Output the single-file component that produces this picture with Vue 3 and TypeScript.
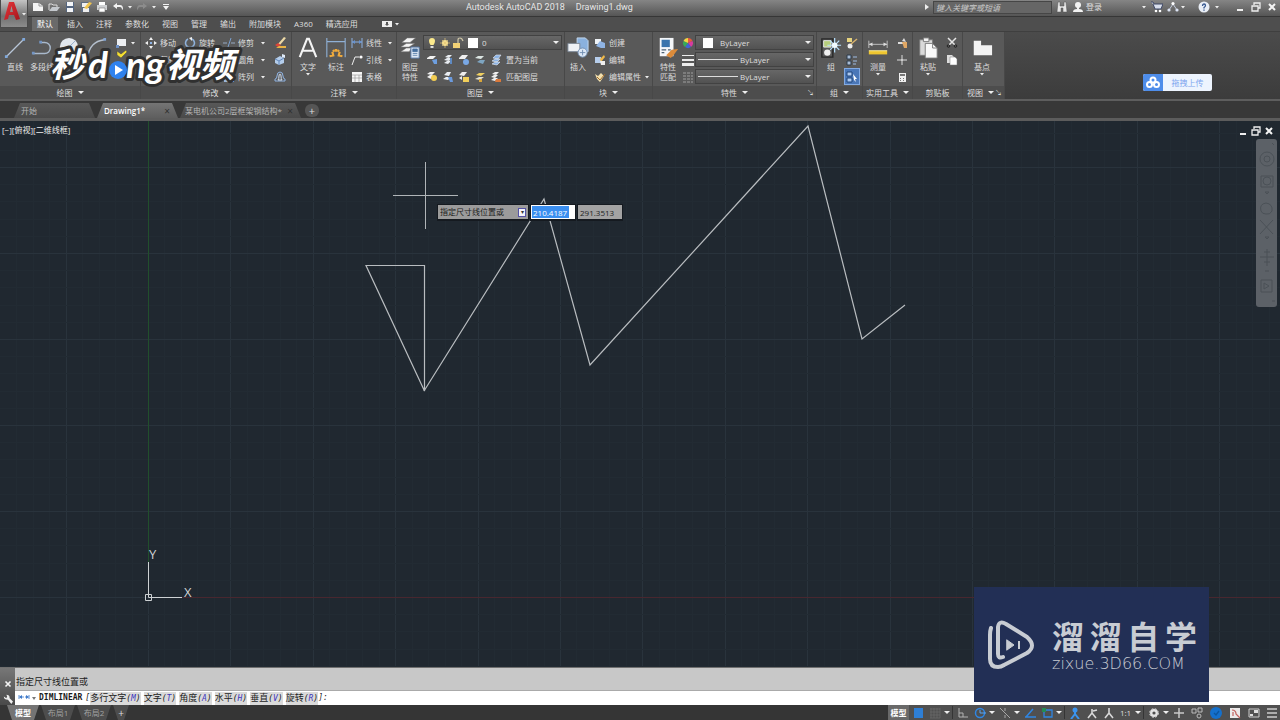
<script setup lang="ts">
import { computed, ref } from 'vue'

interface Cell { icon?: string; text?: string; arrow?: boolean }
interface StatusItem { kind: 'icon' | 'arrow' | 'sep' | 'text' | 'wide'; name?: string }

const quick = ['new', 'open', 'save', 'saveas', 'print', 'undo', 'caret', 'redo', 'caret', 'custom']
const menus = ['默认', '插入', '注释', '参数化', '视图', '管理', '输出', '附加模块', 'A360', '精选应用']
const activeMenu = ref('默认')

const moveCol: Cell[] = [{ icon: 'move', text: '移动' }, { icon: 'copy', text: '复制' }]
const rotateCol: Cell[] = [{ icon: 'rotate', text: '旋转' }]
const trimCol: Cell[] = [
  { icon: 'trim', text: '修剪', arrow: true },
  { icon: 'fillet', text: '圆角', arrow: true },
  { icon: 'array', text: '阵列', arrow: true },
]
const noteCol: Cell[] = [
  { icon: 'linear', text: '线性', arrow: true },
  { icon: 'leader', text: '引线', arrow: true },
  { icon: 'table', text: '表格' },
]
const blockCol: Cell[] = [
  { icon: 'create', text: '创建' },
  { icon: 'edit', text: '编辑' },
  { icon: 'attr', text: '编辑属性', arrow: true },
]
const layerRows = [
  { icons: ['lay1', 'lay2', 'lay3', 'lay4', 'lay5'], text: '置为当前' },
  { icons: ['lay6', 'lay7', 'lay8', 'lay9', 'lay10'], text: '匹配图层' },
]

const options = [
  ['多行文字', 'M'], ['文字', 'T'], ['角度', 'A'], ['水平', 'H'], ['垂直', 'V'], ['旋转', 'R'],
]

const status: StatusItem[] = [
  { kind: 'icon', name: 's-snap' }, { kind: 'icon', name: 's-grid' }, { kind: 'arrow' }, { kind: 'sep' },
  { kind: 'icon', name: 's-ortho' }, { kind: 'icon', name: 's-polar' }, { kind: 'arrow' },
  { kind: 'icon', name: 's-iso' }, { kind: 'arrow' }, { kind: 'icon', name: 's-track' },
  { kind: 'icon', name: 's-osnap' }, { kind: 'arrow' }, { kind: 'sep' },
  { kind: 'icon', name: 's-ann1' }, { kind: 'icon', name: 's-ann2' }, { kind: 'icon', name: 's-ann3' },
  { kind: 'text', name: '1:1' }, { kind: 'arrow' }, { kind: 'sep' },
  { kind: 'icon', name: 's-gear' }, { kind: 'arrow' }, { kind: 'icon', name: 's-plus' },
  { kind: 'wide', name: 's-iso2' }, { kind: 'wide', name: 's-hw' }, { kind: 'wide', name: 's-clean' },
  { kind: 'wide', name: 's-full' }, { kind: 'icon', name: 's-menu' },
]

const origin = { x: 148, y: 477 }
const step = { x: 82.4, y: 86 }
function lines(from: number, size: number, limit: number) {
  const out: { p: number; major: boolean }[] = []
  const minor = size / 5
  for (let k = -Math.floor(from / minor); from + k * minor < limit; k++) {
    out.push({ p: Math.round(from + k * minor), major: k % 5 === 0 })
  }
  return out.sort((a, b) => Number(a.major) - Number(b.major))
}
const columns = computed(() => lines(origin.x, step.x, 2560))
const rows = computed(() => lines(origin.y, step.y, 1440))

const distance = ref('210.4187')
const second = ref('291.3513')
</script>

<template>
  <svg class="defs" aria-hidden="true">
    <defs>
      <linearGradient id="g-red" x1="0" y1="0" x2="1" y2="1"><stop offset="0" stop-color="#e8353a" /><stop offset="1" stop-color="#a3171d" /></linearGradient>
      <symbol id="caret" viewBox="0 0 6 6"><path d="M1 2h4L3 4.600z" fill="#eee" /></symbol>
      <symbol id="new" viewBox="0 0 12 12"><path d="M1 2h6l4 3v5H1z" fill="#f4f4f4" /><path d="M7 2v3h4" fill="none" stroke="#999" /></symbol>
      <symbol id="open" viewBox="0 0 12 12"><path d="M1 9V3h3l1 1h4v2" fill="none" stroke="#ddd" /><path d="M1 10l3-4h8l-3 4z" fill="#c4c8cd" /></symbol>
      <symbol id="save" viewBox="0 0 12 12"><path d="M2 1h8v10H2z" fill="#54657f" /><path d="M3 1h6v4H3zM3 7h6v4H3z" fill="#f3f5f8" /></symbol>
      <symbol id="saveas" viewBox="0 0 12 12"><path d="M1 1h9v10H1z" fill="#5f6c80" /><path d="M2 2h6v4H2zM3 7h6v4H3z" fill="#efefef" /><path d="M4 7l5-6 3 1-5 6z" fill="#efc450" /></symbol>
      <symbol id="print" viewBox="0 0 12 12"><path d="M3 1h6v3H3z" fill="#fff" /><path d="M1 4h10v5H1z" fill="#cfd1d3" /><path d="M3 7h6v4H3z" fill="#fff" stroke="#777" stroke-width=".6" /></symbol>
      <symbol id="undo" viewBox="0 0 12 12"><path d="M1 5l4-3v2h3q3 0 3 4l-1 1q0-3-2-3H5v2z" fill="#f2f2f2" /></symbol>
      <symbol id="redo" viewBox="0 0 12 12"><path d="M11 5L7 2v2H4Q1 4 1 8l1 1q0-3 2-3h3v2z" fill="#8c8c8c" /></symbol>
      <symbol id="custom" viewBox="0 0 12 12"><path d="M3 3h6v1H3zM3 5h6L6 9z" fill="#f2f2f2" /></symbol>

      <symbol id="line" viewBox="0 0 24 24"><path d="M3 21L21 3" stroke="#b8c6d8" stroke-width="1.300" /><path d="M1 20h3v3H1zM20 1h3v3h-3z" fill="#7fa8dc" /></symbol>
      <symbol id="pline" viewBox="0 0 24 24"><path d="M2 18h13a6 6 0 0 0 0-12h-5" fill="none" stroke="#a9b9cc" stroke-width="1.500" /><path d="M1 16h3v3H1zM9 4h3v3H9z" fill="#7395c4" /></symbol>
      <symbol id="circle" viewBox="0 0 24 24"><circle cx="12" cy="11" r="10" fill="#e2e6ec" /><path d="M12 11l7-7" stroke="#8fa6c8" /><path d="M11 10h3v3h-3z" fill="#7d9fd0" /></symbol>
      <symbol id="arc" viewBox="0 0 24 24"><path d="M3 22Q5 5 21 3" fill="none" stroke="#b5c0ce" stroke-width="1.500" /><path d="M1 20h3v3H1zM20 1h3v3h-3z" fill="#7fa0d0" /></symbol>
      <symbol id="rect" viewBox="0 0 12 12"><path d="M2 2h9v7H2z" fill="#eceef1" /><path d="M1 8h3v3H1z" fill="#6d8fc4" /></symbol>
      <symbol id="move" viewBox="0 0 12 12"><path d="M6 0l2 3H4zM6 12l2-3H4zM0 6l3-2v4zM12 6L9 4v4z" fill="#f1f1f1" /><path d="M5 5h2v2H5z" fill="#8cb2e6" /></symbol>
      <symbol id="copy" viewBox="0 0 12 12"><circle cx="4" cy="4" r="3" fill="#eee" /><circle cx="8" cy="8" r="3" fill="#8eaed8" /></symbol>
      <symbol id="rotate" viewBox="0 0 12 12"><path d="M4 2a4.500 4.500 0 1 0 4 0" fill="none" stroke="#8fb2dc" stroke-width="1.600" /><path d="M8 0v4L5 1z" fill="#eee" /></symbol>
      <symbol id="trim" viewBox="0 0 12 12"><path d="M0 6h4M8 6h4" stroke="#96aac4" /><path d="M5 10L8 1" stroke="#7aa0d0" /></symbol>
      <symbol id="fillet" viewBox="0 0 12 12"><path d="M2 2h4q4 0 4 4v4" fill="none" stroke="#a9bdd8" stroke-width="1.500" /></symbol>
      <symbol id="array" viewBox="0 0 12 12"><path d="M1 1h4v4H1zM7 1h4v4H7zM1 7h4v4H1zM7 7h4v4H7z" fill="#9ab6dc" /></symbol>
      <symbol id="erase" viewBox="0 0 12 12"><path d="M4 7l6-7 2 1-6 7z" fill="#ecd9a6" /><path d="M1 8l3-2 3 2-3 2z" fill="#dc463a" /><path d="M5 9h7v2H2z" fill="#e9b344" /></symbol>
      <symbol id="explode" viewBox="0 0 12 12"><path d="M1 5l5-3 4 2v5l-5 2-4-2z" fill="#b4cdeb" /><path d="M1 5l4 2v4M5 7l5-3" fill="none" stroke="#6186b8" /><path d="M8 0l3 1v3L8 3z" fill="#dfeaf8" /></symbol>
      <symbol id="offset" viewBox="0 0 12 12"><path d="M1 10V8q2 0 2-3 0-4 3-4t3 4q0 3 2 3v2z" fill="none" stroke="#8fb3e2" /><path d="M4 9q1-1 1-4 0-2 1-2t1 2q0 3 1 4z" fill="none" stroke="#d5e1f1" /></symbol>
      <symbol id="bigtext" viewBox="0 0 24 24"><path d="M3 22L11 2h2l8 20M6 15h12" fill="none" stroke="#f4f4f4" stroke-width="2.300" /></symbol>
      <symbol id="dim" viewBox="0 0 24 24"><path d="M2 1v21M22 1v21M2 5h20" fill="none" stroke="#8fb0d6" stroke-width="1.200" /><path d="M8 16l1 4-4 1M12 13v3M16 16l-1 4 4 1M9 14l1 2M15 14l-1 2" fill="none" stroke="#efaa3d" stroke-width="2.400" /></symbol>
      <symbol id="linear" viewBox="0 0 12 12"><path d="M1 1v10M11 1v10M1 5h10" stroke="#8db2e2" /><path d="M1 5l3-2v4zM11 5L8 3v4z" fill="#6893cf" /></symbol>
      <symbol id="leader" viewBox="0 0 12 12"><path d="M1 11L4 3h4" fill="none" stroke="#eee" /><circle cx="10" cy="3" r="1.600" fill="#fff" /></symbol>
      <symbol id="table" viewBox="0 0 12 12"><path d="M1 1h10v10H1z" fill="#f5f5f5" /><path d="M1 4h10M1 7h10M4 4v7M8 4v7" stroke="#8d8d8d" stroke-width=".6" /></symbol>
      <symbol id="layers" viewBox="0 0 24 24"><path d="M3 6l6-5h9l-6 5zM2 11l6-4h9l-6 4zM2 16l6-4h6l-3 4z" fill="#f3f3f3" stroke="#777" stroke-width=".6" /><path d="M13 11h9v12h-9z" fill="#dfe8f4" stroke="#577aaa" /><path d="M15 13h5v3h-5zM15 18h5M15 20h5" fill="#466f9f" stroke="#466f9f" stroke-width=".8" /></symbol>
      <symbol id="bulb" viewBox="0 0 12 12"><path d="M3 4a3 3 0 0 1 6 0q0 2-1.500 4h-3Q3 6 3 4z" fill="#fbe98c" /><path d="M4.500 9h3v2h-3z" fill="#ddd" /></symbol>
      <symbol id="sun" viewBox="0 0 12 12"><circle cx="6" cy="6" r="3" fill="#fbe79a" /><path d="M6 1v10M1 6h10M3 3l6 6M9 3l-6 6" stroke="#e5c878" stroke-width=".7" /></symbol>
      <symbol id="lock" viewBox="0 0 12 12"><path d="M1 6h7v5H1z" fill="#f0d075" /><path d="M6 6V3q0-2 2-2t3 3" fill="none" stroke="#cfc7a8" stroke-width="1.200" /></symbol>
      <symbol id="lay1" viewBox="0 0 12 12"><path d="M1 4l3-2h6L7 5H1z" fill="#f3f3f3" /><path d="M6 6l5-1v5H8z" fill="#6e9fe0" /></symbol>
      <symbol id="lay2" viewBox="0 0 12 12"><path d="M3 3l3-2h4L7 4zM2 6l3-2h5L7 7zM2 9l3-2h4L6 10z" fill="#e8ecf1" /><path d="M8 4h2v6H8z" fill="#5f8ac2" /></symbol>
      <symbol id="lay3" viewBox="0 0 12 12"><path d="M1 4l3-3h6L7 5H1z" fill="#f0f0f0" /><circle cx="8" cy="8" r="3" fill="#79a8e5" /></symbol>
      <symbol id="lay4" viewBox="0 0 12 12"><path d="M1 4l3-2h6L7 5z" fill="#dbe5e2" /><path d="M3 8l3-2h5L9 10z" fill="#7ea5c1" /></symbol>
      <symbol id="lay5" viewBox="0 0 12 12"><path d="M3 4l3-3h5L8 5zM2 7l3-2h5L7 8zM2 10l3-2h5l-3 3z" fill="#8cb3e4" stroke="#e8eef6" stroke-width=".6" /></symbol>
      <symbol id="lay6" viewBox="0 0 12 12"><path d="M1 3l3-2h5L6 4zM1 6l3-2h3L5 8z" fill="#eee" /><circle cx="8" cy="7" r="3" fill="#f2cd52" /></symbol>
      <symbol id="lay7" viewBox="0 0 12 12"><path d="M2 4l3-3h4L7 5zM1 8l3-2h5L6 9z" fill="#e9edf2" /><path d="M6 6h4l1 5H8z" fill="#6b9add" /></symbol>
      <symbol id="lay8" viewBox="0 0 12 12"><path d="M1 4l3-3h5L6 5zM1 7l3-2v4z" fill="#eee" /><path d="M5 6h6v5H5z" fill="#f1cf5a" /></symbol>
      <symbol id="lay9" viewBox="0 0 12 12"><path d="M2 4l3-2h6L7 5z" fill="#f0d060" /><path d="M1 8l4-2h5L6 9z" fill="#e4e0ce" /><path d="M5 8h3v3H5z" fill="#d9a63a" /></symbol>
      <symbol id="lay10" viewBox="0 0 12 12"><path d="M2 3l3-2h4L6 4zM1 6l3-2h4L5 7zM1 9l3-2h4l-3 3z" fill="#eee" /><path d="M6 8h5v3H5z" fill="#d9783a" /></symbol>
      <symbol id="insert" viewBox="0 0 24 24"><path d="M11 1h9l3 3v12H11z" fill="#8ab1de" stroke="#c7dcf2" /><path d="M1 7h13v9H1z" fill="#eef1f5" stroke="#7a8694" /><circle cx="17" cy="17" r="5" fill="#dbe7f5" stroke="#6f8cb0" /><path d="M14 17h6M17 14v6" stroke="#6f8cb0" /></symbol>
      <symbol id="create" viewBox="0 0 12 12"><path d="M1 2h6v5H1z" fill="#eef2f6" /><path d="M2 9l4-5 5 2v5H7z" fill="#8fb4e4" /></symbol>
      <symbol id="edit" viewBox="0 0 12 12"><path d="M1 3h6v6H1z" fill="#b6cdeb" /><path d="M6 5l4-4 1 2-4 5z" fill="#f0b94a" /><path d="M6 7h5v4H7z" fill="#eee" /></symbol>
      <symbol id="attr" viewBox="0 0 12 12"><path d="M1 3l3 2 3-3 3 3-4 6-3-3z" fill="#f3e0ae" /><path d="M3 6l3 3 5-6" fill="none" stroke="#a26a28" /></symbol>
      <symbol id="match" viewBox="0 0 24 24"><path d="M3 1h15v20H3z" fill="#f4f6f9" /><path d="M5 3h9v8H5z" fill="#3b74ad" /><path d="M5 14h5M5 17h3M12 14h3" stroke="#4d6275" stroke-width="1.500" /><path d="M10 20l6-6 7-1-5 7-3 3z" fill="#dc8b3a" /></symbol>
      <symbol id="wheel" viewBox="0 0 12 12"><path d="M6 6L6 1a5 5 0 0 1 4.500 3z" fill="#e65a3d" /><path d="M6 6l4.500-2a5 5 0 0 1-1.500 6z" fill="#d83ba0" /><path d="M6 6l3 4a5 5 0 0 1-6 0z" fill="#4263d6" /><path d="M6 6l-3 4a5 5 0 0 1-1.500-6z" fill="#37aa5a" /><path d="M6 6L1.500 4A5 5 0 0 1 6 1z" fill="#f1d543" /></symbol>
      <symbol id="weights" viewBox="0 0 12 12"><path d="M0 1h12v1H0zM0 5h12v2H0zM0 9h12v3H0z" fill="#ededed" /></symbol>
      <symbol id="types" viewBox="0 0 12 12"><path d="M1 2h10M1 5h10M1 8h10M1 11h10" stroke="#a0a0a0" stroke-dasharray="3 1" /></symbol>
      <symbol id="group" viewBox="0 0 24 24"><path d="M2 2h12v20H2z" fill="none" stroke="#282828" stroke-width="1.500" /><path d="M4 4h8v7H4z" fill="#b6cd7b" stroke="#eee" /><circle cx="8" cy="17" r="3.500" fill="#f0f0f0" /><path d="M16 1v16M8 9h15M11 4l10 10M21 4L11 14" stroke="#b8e2ff" stroke-width="1.300" /><circle cx="16" cy="9" r="3" fill="#f1fbff" /></symbol>
      <symbol id="grp1" viewBox="0 0 12 12"><path d="M1 1h5v4H1z" fill="#e6d27d" /><circle cx="4" cy="9" r="2.500" fill="#eee" /><path d="M5 7l6-5" stroke="#d8b36d" stroke-width="1.500" /></symbol>
      <symbol id="grp2" viewBox="0 0 12 12"><path d="M1 1h4v4H1zM1 7h4v4H1z" fill="#a8bcd5" stroke="#2d3a4b" /><path d="M7 3h4M7 7h4M7 10h3" stroke="#9ebce4" /></symbol>
      <symbol id="grp3" viewBox="0 0 12 12"><path d="M1 1h5v4H1zM1 7h5v4H1z" fill="#aecaf2" stroke="#1f4478" /><path d="M7 3l4 5-2 0 1 3-2-2z" fill="#fff" /></symbol>
      <symbol id="measure" viewBox="0 0 24 24"><path d="M2 4v8M22 4v8M2 8h20" stroke="#c6c6c6" /><path d="M2 8l4-2v4zM22 8l-4-2v4z" fill="#ddd" /><path d="M2 15h20v4H2z" fill="#efc630" /><path d="M2 15h20" stroke="#fff2a0" /></symbol>
      <symbol id="qsel" viewBox="0 0 12 12"><path d="M8 1l2 4-4-1zM2 5h6v2H2z" fill="#ddd" /><path d="M6 5h5v6H8z" fill="#e0a765" /></symbol>
      <symbol id="point" viewBox="0 0 12 12"><path d="M6 1v10M1 6h10" stroke="#ddd" /><path d="M5 5h2v2H5z" fill="#ccc" /></symbol>
      <symbol id="calc" viewBox="0 0 12 12"><path d="M3 2h7v9H3z" fill="#f0f0f0" /><path d="M4 3h5v2H4zM4 7h1v1H4zM7 7h1v1H7zM4 9h1v1H4zM7 9h1v1H7z" fill="#777" /></symbol>
      <symbol id="paste" viewBox="0 0 24 24"><path d="M3 3h14v17H3z" fill="#d9d9d9" stroke="#767676" /><path d="M7 1h6v4H7z" fill="#f3f3f3" stroke="#777" /><path d="M9 7h8l5 5v11H9z" fill="#f8f8f8" stroke="#777" /><path d="M17 7v5h5" fill="none" stroke="#777" /></symbol>
      <symbol id="cut" viewBox="0 0 12 12"><path d="M2 1l7 7M10 1L3 8" stroke="#e6e6e6" stroke-width="1.500" /><circle cx="2.500" cy="9" r="1.300" fill="none" stroke="#222" /><circle cx="9.500" cy="9" r="1.300" fill="none" stroke="#222" /></symbol>
      <symbol id="clipcopy" viewBox="0 0 12 12"><path d="M1 1h5l2 2v6H1z" fill="#ddd" /><path d="M4 3h5l2 2v6H4z" fill="#fff" stroke="#777" stroke-width=".5" /></symbol>
      <symbol id="base" viewBox="0 0 24 24"><path d="M3 4h8v5h12v11H3z" fill="#f3f3f3" /></symbol>

      <symbol id="find" viewBox="0 0 12 12"><path d="M2 1h2v4h4V1h2l1 10H7V7H5v4H1z" fill="#e7e7e7" stroke="#555" stroke-width=".5" /></symbol>
      <symbol id="user" viewBox="0 0 12 12"><circle cx="6" cy="4" r="3" fill="#f3f3f3" /><path d="M5 6h2v2q4 0 4 3H1q0-3 4-3z" fill="#f3f3f3" /></symbol>
      <symbol id="cart" viewBox="0 0 12 12"><path d="M0 1h2l1 2h9l-2 5H4L2 3" fill="#d8deec" stroke="#3d4664" /><circle cx="5" cy="10" r="1.300" fill="#fff" /><circle cx="9" cy="10" r="1.300" fill="#fff" /></symbol>
      <symbol id="a360" viewBox="0 0 12 12"><path d="M2 9l4-6 4 6" fill="none" stroke="#c3cbdc" /><circle cx="6" cy="2.500" r="1.600" fill="#fff" /><circle cx="2" cy="9" r="1.600" fill="#dce4f4" /><circle cx="10" cy="9" r="1.600" fill="#dce4f4" /></symbol>
      <symbol id="help" viewBox="0 0 12 12"><circle cx="6" cy="6" r="5.500" fill="#e9eef6" /><path d="M4.500 5q0-2 1.500-2t1.500 1.500Q7.500 5.500 6 6.500v1M6 8.500v1.200" fill="none" stroke="#35578f" stroke-width="1.300" /></symbol>
      <symbol id="w-min" viewBox="0 0 12 12"><path d="M3 8h6v2H3z" fill="#eee" /></symbol>
      <symbol id="w-res" viewBox="0 0 12 12"><path d="M4 4V2h6v5H8M2 5h6v5H2z" fill="none" stroke="#eee" stroke-width="1.300" /></symbol>
      <symbol id="w-close" viewBox="0 0 12 12"><path d="M3 3l6 6M9 3L3 9" stroke="#f4f4f4" stroke-width="2" /></symbol>
      <symbol id="play" viewBox="0 0 12 12"><path d="M1 3h10v6H1z" fill="#eee" /><path d="M5 4h2v2h1L6 8 4 6h1z" fill="#555" /></symbol>
      <symbol id="wrench" viewBox="0 0 12 12"><path d="M4 1q4 0 4 4l4 4-2 3-4-5Q1 7 1 3l3 2 1-2z" fill="#eee" /></symbol>
      <symbol id="dimsmall" viewBox="0 0 12 12"><path d="M1 3v4M11 3v4M2 5h8" stroke="#5b8fd6" stroke-dasharray="4 1" /><path d="M1 5l3-2v4zM11 5L8 3v4z" fill="#3f79c9" /></symbol>

      <symbol id="s-snap" viewBox="0 0 12 12"><path d="M2 1h9v10H2z" fill="#2e7fd6" /></symbol>
      <symbol id="s-grid" viewBox="0 0 12 12"><path d="M2 1v10M5 1v10M8 1v10M11 1v10M1 2h10M1 5h10M1 8h10M1 11h10" stroke="#717171" stroke-width=".6" /></symbol>
      <symbol id="s-ortho" viewBox="0 0 12 12"><path d="M2 1v9h9M2 6h4v4" fill="none" stroke="#b2b2b2" /></symbol>
      <symbol id="s-polar" viewBox="0 0 12 12"><circle cx="6" cy="6" r="4.500" fill="none" stroke="#2f86e2" stroke-width="1.500" /><path d="M6 6h6M6 6V3" stroke="#58a4f2" /></symbol>
      <symbol id="s-iso" viewBox="0 0 12 12"><path d="M1 1l10 10M6 1v3M6 8v3" stroke="#a8a8a8" /></symbol>
      <symbol id="s-track" viewBox="0 0 12 12"><path d="M1 10h11M2 10l7-8" stroke="#2f86e2" stroke-width="1.500" /></symbol>
      <symbol id="s-osnap" viewBox="0 0 12 12"><path d="M3 3h8v7H3z" fill="none" stroke="#2f86e2" stroke-width="1.300" /><path d="M1 1h4v4H1z" fill="#248c54" /></symbol>
      <symbol id="s-ann1" viewBox="0 0 12 12"><circle cx="6" cy="3" r="2.500" fill="#3b94ee" /><path d="M6 4v4M2 12l4-5 4 5" fill="none" stroke="#3b94ee" stroke-width="2" /></symbol>
      <symbol id="s-ann2" viewBox="0 0 12 12"><path d="M6 2v5M2 11l4-5 4 5M7 4l4-1" fill="none" stroke="#d8d8d8" stroke-width="1.600" /></symbol>
      <symbol id="s-ann3" viewBox="0 0 12 12"><path d="M6 1v6M2 11l4-5 4 5" fill="none" stroke="#d8d8d8" stroke-width="1.600" /></symbol>
      <symbol id="s-gear" viewBox="0 0 12 12"><circle cx="6" cy="6" r="2.800" fill="none" stroke="#e4e4e4" stroke-width="2.400" /><circle cx="6" cy="6" r="4.400" fill="none" stroke="#d4d4d4" stroke-dasharray="2 1.500" /></symbol>
      <symbol id="s-plus" viewBox="0 0 12 12"><path d="M6 1v10M1 6h10" stroke="#c9c9c9" stroke-width="1.500" /></symbol>
      <symbol id="s-iso2" viewBox="0 0 12 12"><path d="M1 2h4v4H1zM7 1h4v4H7z" fill="none" stroke="#bbb" /><circle cx="8" cy="9" r="2" fill="none" stroke="#bbb" /></symbol>
      <symbol id="s-hw" viewBox="0 0 12 12"><circle cx="6" cy="6" r="6" fill="#1470cc" /><path d="M4 6l2 2 3-4" fill="none" stroke="#0d569e" stroke-width="1.300" /></symbol>
      <symbol id="s-clean" viewBox="0 0 12 12"><path d="M1 1h10v10H1z" fill="#eceaea" /><path d="M3 3q4 0 4 4l4 4M4 9V5" fill="none" stroke="#c2605c" stroke-width="1.200" /></symbol>
      <symbol id="s-full" viewBox="0 0 12 12"><path d="M1 2h10v8H1z" fill="none" stroke="#ccc" /><path d="M6 3h4v3H6zM2 7h3v2H2z" fill="#ddd" /></symbol>
      <symbol id="s-menu" viewBox="0 0 12 12"><path d="M1 2h10M1 6h10M1 10h10" stroke="#ccc" stroke-width="1.300" /></symbol>
    </defs>
  </svg>

  <div class="app">
    <button class="appmenu" aria-label="应用程序菜单">
      <svg class="logo" viewBox="0 0 18 20"><path d="M1 19L6 1h5l6 17-4 1-2-5H6l-1 4zM7 11h3L8.500 5z" fill="url(#g-red)" fill-rule="evenodd" /></svg>
      <svg class="c6"><use href="#caret" /></svg>
    </button>

    <header class="titlebar">
      <nav class="quick">
        <button v-for="(q, i) in quick" :key="i" :class="{ small: q === 'caret' }" :aria-label="q">
          <svg :class="q === 'caret' ? 'c6' : 'i12'"><use :href="'#' + q" /></svg>
        </button>
      </nav>
      <h1><span>Autodesk AutoCAD 2018</span><span>Drawing1.dwg</span></h1>
      <div class="tools">
        <i class="tri-right"></i>
        <input class="search" type="text" placeholder="键入关键字或短语" aria-label="搜索" />
        <svg class="i12"><use href="#find" /></svg>
        <button class="login"><svg class="i12"><use href="#user" /></svg>登录</button>
        <svg class="c6"><use href="#caret" /></svg>
        <svg class="i12"><use href="#cart" /></svg>
        <svg class="i12"><use href="#a360" /></svg>
        <svg class="c6 near"><use href="#caret" /></svg>
        <svg class="i12 helpicon"><use href="#help" /></svg>
        <svg class="c6"><use href="#caret" /></svg>
      </div>
      <div class="window">
        <button aria-label="最小化"><svg class="i12"><use href="#w-min" /></svg></button>
        <button aria-label="还原"><svg class="i12"><use href="#w-res" /></svg></button>
        <button aria-label="关闭"><svg class="i12"><use href="#w-close" /></svg></button>
      </div>
    </header>

    <nav class="menus">
      <button v-for="m in menus" :key="m" :class="{ on: m === activeMenu }" @click="activeMenu = m">{{ m }}</button>
      <button class="media" aria-label="更多"><svg class="i12"><use href="#play" /></svg><svg class="c6"><use href="#caret" /></svg></button>
    </nav>

    <div class="ribbon">
      <section class="panel draw">
        <div class="body">
          <button class="big"><svg><use href="#line" /></svg>直线</button>
          <button class="big"><svg><use href="#pline" /></svg>多段线</button>
          <button class="big" aria-label="圆"><svg><use href="#circle" /></svg></button>
          <button class="big" aria-label="圆弧"><svg><use href="#arc" /></svg></button>
          <div class="col">
            <button class="cell" aria-label="矩形"><svg class="i12"><use href="#rect" /></svg><svg class="c6"><use href="#caret" /></svg></button>
          </div>
        </div>
        <footer>绘图<i class="tri"></i></footer>
      </section>

      <section class="panel modify">
        <div class="body">
          <div v-for="(col, i) in [moveCol, rotateCol, trimCol]" :key="i" class="col">
            <button v-for="c in col" :key="c.text" class="cell">
              <svg class="i12"><use :href="'#' + c.icon" /></svg>{{ c.text }}<svg v-if="c.arrow" class="c6 end"><use href="#caret" /></svg>
            </button>
          </div>
          <div class="col">
            <button v-for="n in ['erase', 'explode', 'offset']" :key="n" class="cell" :aria-label="n"><svg class="i12"><use :href="'#' + n" /></svg></button>
          </div>
        </div>
        <footer>修改<i class="tri"></i></footer>
      </section>

      <section class="panel note">
        <div class="body">
          <button class="big"><svg><use href="#bigtext" /></svg>文字<svg class="c6"><use href="#caret" /></svg></button>
          <button class="big"><svg><use href="#dim" /></svg>标注</button>
          <div class="col fill">
            <button v-for="c in noteCol" :key="c.text" class="cell">
              <svg class="i12"><use :href="'#' + c.icon" /></svg>{{ c.text }}<svg v-if="c.arrow" class="c6 end"><use href="#caret" /></svg>
            </button>
          </div>
        </div>
        <footer>注释<i class="tri"></i></footer>
      </section>

      <section class="panel layer">
        <div class="body">
          <button class="big"><svg><use href="#layers" /></svg>图层<span>特性</span></button>
          <div class="col fill">
            <label class="combo">
              <svg class="i12"><use href="#bulb" /></svg><svg class="i12"><use href="#sun" /></svg><svg class="i12"><use href="#lock" /></svg><i class="swatch"></i>
              <select aria-label="图层"><option>0</option></select><i class="tri"></i>
            </label>
            <div v-for="r in layerRows" :key="r.text" class="cell">
              <button v-for="n in r.icons" :key="n" :aria-label="n"><svg class="i12"><use :href="'#' + n" /></svg></button>
              <button>{{ r.text }}</button>
            </div>
          </div>
        </div>
        <footer>图层<i class="tri"></i></footer>
      </section>

      <section class="panel block">
        <div class="body">
          <button class="big"><svg><use href="#insert" /></svg>插入</button>
          <div class="col fill">
            <button v-for="c in blockCol" :key="c.text" class="cell">
              <svg class="i12"><use :href="'#' + c.icon" /></svg>{{ c.text }}<svg v-if="c.arrow" class="c6 end"><use href="#caret" /></svg>
            </button>
          </div>
        </div>
        <footer>块<i class="tri"></i></footer>
      </section>

      <section class="panel props">
        <div class="body">
          <button class="big"><svg><use href="#match" /></svg>特性<span>匹配</span></button>
          <div class="col">
            <button v-for="n in ['wheel', 'weights', 'types']" :key="n" class="cell" :aria-label="n"><svg class="i12"><use :href="'#' + n" /></svg></button>
          </div>
          <div class="col fill">
            <label class="combo color"><i class="swatch"></i><select aria-label="颜色"><option>ByLayer</option></select><i class="tri"></i></label>
            <label class="combo"><i class="rule"></i><select aria-label="线宽"><option>ByLayer</option></select><i class="tri"></i></label>
            <label class="combo"><i class="rule"></i><select aria-label="线型"><option>ByLayer</option></select><i class="tri"></i></label>
          </div>
        </div>
        <footer>特性<i class="tri"></i><i class="launch">↘</i></footer>
      </section>

      <section class="panel grp">
        <div class="body">
          <button class="big"><svg><use href="#group" /></svg>组</button>
          <div class="col">
            <button v-for="n in ['grp1', 'grp2', 'grp3']" :key="n" class="cell" :class="{ pressed: n === 'grp3' }" :aria-label="n"><svg class="i12"><use :href="'#' + n" /></svg></button>
          </div>
        </div>
        <footer>组<i class="tri"></i></footer>
      </section>

      <section class="panel util">
        <div class="body">
          <button class="big"><svg><use href="#measure" /></svg>测量<svg class="c6"><use href="#caret" /></svg></button>
          <div class="col">
            <button v-for="n in ['qsel', 'point', 'calc']" :key="n" class="cell" :aria-label="n"><svg class="i12"><use :href="'#' + n" /></svg></button>
          </div>
        </div>
        <footer>实用工具<i class="tri"></i></footer>
      </section>

      <section class="panel clip">
        <div class="body">
          <button class="big"><svg><use href="#paste" /></svg>粘贴<svg class="c6"><use href="#caret" /></svg></button>
          <div class="col">
            <button v-for="n in ['cut', 'clipcopy']" :key="n" class="cell" :aria-label="n"><svg class="i12"><use :href="'#' + n" /></svg></button>
          </div>
        </div>
        <footer>剪贴板</footer>
      </section>

      <section class="panel view">
        <div class="body">
          <button class="big"><svg><use href="#base" /></svg>基点<svg class="c6"><use href="#caret" /></svg></button>
        </div>
        <footer>视图<i class="tri"></i><i class="launch">↘</i></footer>
      </section>

      <button class="upload">
        <svg viewBox="0 0 20 17"><g fill="none" stroke="#fff" stroke-width="2"><circle cx="10" cy="6" r="2.500" /><circle cx="6.500" cy="10.500" r="2.500" /><circle cx="13.500" cy="10.500" r="2.500" /></g></svg>
        <span>拖拽上传</span>
      </button>

      <svg class="brand" viewBox="0 0 196 52" role="img" aria-label="秒dong视频">
        <g class="brandtext">
          <text x="4" y="34" class="cjk">秒</text>
          <text x="42" y="35" class="lat">d</text>
          <text x="80" y="35" class="lat">ng</text>
          <text x="120" y="34" class="cjk">视频</text>
        </g>
        <circle cx="72" cy="27" r="9" fill="#2f82ee" />
        <path d="M69 22l8 5-8 5z" fill="#fff" />
        <path d="M71 8l4 3 5-4 1 2-6 6-4-3z" fill="#f5df31" stroke="#444" stroke-width=".5" />
      </svg>
    </div>

    <nav class="files">
      <button class="file">开始</button>
      <button class="file on"><b>Drawing1*</b><span>×</span></button>
      <button class="file long">某电机公司2层框架钢结构*<span>×</span></button>
      <button class="add" aria-label="新建图形">+</button>
    </nav>

    <main class="stage">
      <svg class="drawing">
        <g class="grid">
          <line v-for="c in columns" :key="'c' + c.p" :x1="c.p + 0.5" y1="0" :x2="c.p + 0.5" y2="100%" :class="{ major: c.major }" />
          <line v-for="r in rows" :key="'r' + r.p" x1="0" :y1="r.p - 0.5" x2="100%" :y2="r.p - 0.5" :class="{ major: r.major }" />
        </g>
        <line x1="148.500" y1="0" x2="148.500" y2="441" stroke="#214f2c" />
        <line x1="182" y1="476.500" x2="100%" y2="476.500" stroke="#48272f" />
        <g fill="none" stroke="#b9bdc0" stroke-width="1.200">
          <path d="M366 144.500H424.500V270z" />
          <path d="M424 270L544 78 590 244 808 5 862 218 905 184" />
        </g>
        <path d="M393 74.500h65M425.500 41v67" fill="none" stroke="#b0b5b8" />
        <path d="M148.500 441v35.500H182M145.500 473.500h6v6h-6z" fill="none" stroke="#ced2d4" />
        <text x="149" y="438" class="axis">Y</text>
        <text x="184" y="476" class="axis">X</text>
      </svg>

      <div class="viewlabel">[−][俯视][二维线框]</div>
      <div class="viewwin">
        <button aria-label="最小化"><svg class="i12"><use href="#w-min" /></svg></button>
        <button aria-label="还原"><svg class="i12"><use href="#w-res" /></svg></button>
        <button aria-label="关闭"><svg class="i12"><use href="#w-close" /></svg></button>
      </div>

      <aside class="navbar">
        <svg viewBox="0 0 20 167" fill="none" stroke="#4b5157">
          <circle cx="11" cy="20" r="7" /><circle cx="11" cy="20" r="3" />
          <path d="M5 37h12v11H5z" /><circle cx="11" cy="42" r="4" /><path d="M9 53h4l-2 2z" />
          <path d="M5 72q-2-7 5-8 7 1 6 8-2 4-6 3-4 0-5-3z" />
          <path d="M4 81l13 14M17 81L4 95M9 98h4l-2 2z" />
          <path d="M11 110v17M4 118h14M8 113h6M8 123h6M9 132h4" />
          <path d="M5 141h11v12H5zM8 144v6l5-3zM16 4l2 2M16 162h3" />
        </svg>
      </aside>

      <form class="dynamic" @submit.prevent>
        <label class="prompt" for="dyn-a">指定尺寸线位置或<i>▾</i></label>
        <input id="dyn-a" v-model="distance" class="active" type="text" />
        <input v-model="second" type="text" aria-label="第二坐标" />
      </form>
    </main>

    <section class="command">
      <div class="grip">
        <button aria-label="关闭"><svg class="i12"><use href="#w-close" /></svg></button>
        <button aria-label="自定义"><svg class="i12"><use href="#wrench" /></svg></button>
      </div>
      <div class="lines">
        <div class="history">指定尺寸线位置或</div>
        <div class="current">
          <svg class="i12"><use href="#dimsmall" /></svg><i class="tri dark"></i>
          <b>DIMLINEAR</b><em>[</em>
          <button v-for="o in options" :key="o[1]">{{ o[0] }}<em>(<u>{{ o[1] }}</u>)</em></button>
          <em>]:</em>
        </div>
      </div>
    </section>

    <footer class="statusbar">
      <nav class="layouts">
        <button class="on">模型</button>
        <button>布局1</button>
        <button>布局2</button>
        <button class="plus" aria-label="新建布局">+</button>
      </nav>
      <div class="toggles">
        <button class="model">模型</button>
        <template v-for="(s, i) in status" :key="i">
          <i v-if="s.kind === 'sep'" class="sep"></i>
          <button v-else :class="s.kind" :aria-label="s.name ?? '选项'">
            <i v-if="s.kind === 'arrow'" class="tri"></i>
            <template v-else-if="s.kind === 'text'">{{ s.name }}</template>
            <svg v-else class="i12"><use :href="'#' + s.name" /></svg>
          </button>
        </template>
      </div>
    </footer>

    <aside class="site">
      <svg viewBox="0 0 48 52" fill="none" stroke="#c8ccd3" stroke-width="4" stroke-linecap="round" stroke-linejoin="round">
        <path d="M4 9Q3 12 3 16v24q0 8 8 8 3 0 6-2l23-12q10-7 0-16L19 5Q12 1 11 8v27q0 5 5 3" />
        <path d="M20 21l7 5-7 5z" fill="#c8ccd3" stroke-width="1" />
        <path d="M32 22v8" stroke-width="2" stroke-linecap="butt" />
      </svg>
      <div class="sitename">
        <strong><span>溜</span><span>溜</span><span>自</span><span>学</span></strong>
        <small>zixue.3D66.COM</small>
      </div>
    </aside>
  </div>
</template>

<style>
body { margin: 0; background: #202830; }
</style>

<style scoped>
* { box-sizing: border-box; }
.defs { position: absolute; width: 0; height: 0; }
.app {
  position: relative; display: flex; flex-direction: column; min-height: 100vh; overflow: hidden;
  font: 8px/10px "Open Sans", "Noto Sans CJK SC", sans-serif; color: #dedede; background: #3a3a3a;
}
button { padding: 0; border: 0; background: none; color: inherit; font: inherit; white-space: nowrap; cursor: pointer; }
input, select { font: inherit; color: inherit; border: 0; padding: 0; min-width: 0; outline: 0; }
i { font-style: normal; flex: none; }
svg { display: block; flex: none; }
.i12 { width: 12px; height: 12px; }
.c6 { width: 6px; height: 6px; }
.tri { width: 0; height: 0; border: 3px solid transparent; border-top-color: #eee; border-bottom: 0; }
.tri.dark { border-width: 3px 2px 0; border-top-color: #777; }

.appmenu {
  position: absolute; z-index: 2; left: 0; top: 0; width: 28px; height: 28px; display: flex; align-items: center;
  padding-left: 2px; background: linear-gradient(#c4c4c4, #717171 60%, #8c8c8c); border: 1px solid #4a4a4a; border-top: 0;
}
.logo { width: 18px; height: 20px; margin-top: -5px; }

.titlebar {
  height: 17px; display: flex; align-items: center; justify-content: space-between; padding: 0 2px 2px 32px;
  background: linear-gradient(#858585, #555); border-bottom: 1px solid #363636; position: relative;
}
.quick { display: flex; align-items: center; gap: 4px; }
.quick .small { width: 6px; margin: 0 -1px; }
h1 {
  position: absolute; left: 36.4%; margin: 0; display: flex; gap: 11px;
  font: 400 9px/16px Roboto, sans-serif; color: #e6e6e6; white-space: nowrap;
}
.tools { display: flex; align-items: center; gap: 4px; margin-left: auto; }
.tri-right { border: 3px solid transparent; border-left: 4px solid #eee; border-right: 0; }
.search { width: 119px; height: 13px; padding-left: 2px; background: #666; border: 1px solid #464646; font-style: italic; }
.search::placeholder { color: #c9c9c9; opacity: 1; }
.login { display: flex; align-items: center; gap: 2px; margin-right: 35px; }
.near { margin-left: -3px; }
.helpicon { margin-left: 8px; }
.window { display: flex; gap: 4px; margin-left: 14px; }

.menus { height: 15px; display: flex; align-items: stretch; gap: 13px; padding-left: 32px; background: #4e4e4e; border-bottom: 1px solid #3f3f3f; }
.menus button.on { background: #6a6a6a; padding: 0 5px; margin-right: -4px; color: #fff; }
.menus .media { display: flex; align-items: center; gap: 1px; margin-left: 10px; }

.ribbon { position: relative; display: flex; height: 69px; background: linear-gradient(#4b4b4b, #3c3c3c); border-bottom: 2px solid #5e5e5e; }
.panel { display: flex; flex-direction: column; background: #595959; border-right: 1px solid #484848; flex: none; }
.body { flex: 1; display: flex; padding: 2px 2px 0 3px; }
.panel footer { height: 13px; display: flex; align-items: center; justify-content: center; gap: 5px; background: #4d4d4d; position: relative; }
.launch { position: absolute; right: 2px; font-size: 7px; }
.draw { width: 141px; }
.modify { width: 151px; }
.note { width: 105px; }
.layer { width: 168px; }
.block { width: 88px; }
.props { width: 164px; }
.grp { width: 46px; }
.util { width: 50px; }
.clip { width: 50px; }
.view { width: 42px; }
.big { width: 26px; display: flex; flex-direction: column; align-items: center; padding-top: 2px; }
.big > svg:first-child { width: 22px; height: 24px; margin-bottom: 2px; }
.big .c6 { margin-top: -1px; }
.draw .big { width: 27px; padding-right: 1px; }
.draw .body { padding-left: 2px; }
.col { display: flex; flex-direction: column; }
.fill { flex: 1; }
.cell { height: 17px; display: flex; align-items: center; gap: 3px; }
.end { margin-left: auto; }
.draw .col { padding-left: 5px; }
.modify .body { padding-left: 4px; }
.modify .col { width: 39px; }
.modify .col:nth-child(3) { width: 43px; }
.modify .col:last-child { width: 12px; margin-left: 8px; }
.note .body { gap: 2px; padding-right: 3px; }
.layer .body { padding-left: 0; }
.layer .cell { gap: 4px; padding-left: 3px; }
.block .body { padding-left: 0; gap: 3px; }
.props .body { padding-left: 2px; }
.props .body .col:not(.fill) { padding: 0 1px; }
.combo {
  height: 15px; margin: 1px 0; display: flex; align-items: center; gap: 4px; padding: 0 2px;
  background: linear-gradient(#676767, #525252); border: 1px solid #424242;
}
.combo select { flex: 1; appearance: none; background: none; }
.swatch { width: 10px; height: 10px; background: #fff; }
.layer .combo { gap: 1px; }
.layer .combo .swatch { margin: 0 3px; }
.combo.color { gap: 7px; padding-left: 7px; }
.rule { width: 40px; height: 1px; background: #ddd; }
.combo .rule { margin-right: -2px; }
.pressed { background: #4a77b8; outline: 1px solid #83aae2; outline-offset: -1px; }
.grp .col, .util .col, .clip .col { width: 16px; }
.grp .cell, .util .cell, .clip .cell { justify-content: center; }
.grp .body { padding-left: 1px; }
.util .body, .clip .body { padding-left: 2px; gap: 3px; }
.view .body { padding-left: 6px; }
.view footer { justify-content: flex-start; padding-left: 4px; }

.upload {
  position: absolute; right: 68px; top: 42px; width: 69px; height: 17px; display: flex; overflow: hidden;
  border-radius: 2px; background: #edf4fe; color: #7da4ee;
}
.upload svg { width: 20px; height: 17px; background: #4e8dea; }
.upload span { flex: 1; line-height: 17px; }

.brand { position: absolute; left: 46px; top: 11px; width: 196px; height: 52px; overflow: visible; }
.brandtext { fill: #fff; stroke: #303030; stroke-width: 6px; stroke-linejoin: round; paint-order: stroke; font-style: italic; font-weight: 700; }
.cjk { font-family: "Noto Sans CJK SC", sans-serif; font-size: 34px; }
.lat { font-family: Lato, "Open Sans", sans-serif; font-size: 37px; }

.files { height: 20px; display: flex; align-items: stretch; padding: 2px 0 0 14px; gap: 2px; background: #383838; border-bottom: 3px solid #5c5c5c; }
.file {
  width: 81px; display: flex; align-items: center; justify-content: space-between; padding: 0 8px 0 7px; color: #b4b4b4;
  background: linear-gradient(#585858, #4a4a4a); clip-path: polygon(6px 0, calc(100% - 6px) 0, 100% 100%, 0 100%);
}
.file b { font-weight: 600; }
.file span { color: #303030; font-size: 10px; }
.file.on { color: #fff; background: linear-gradient(#757575, #5e5e5e); }
.file.long { width: 121px; padding: 0 8px 0 5px; }
.add { width: 14px; margin: 1px 2px; border-radius: 6px; background: #555; font-size: 11px; }

.stage { position: relative; flex: 1; min-height: 300px; background: #202830; overflow: hidden; }
.drawing { position: absolute; left: 0; top: 0; width: 100%; height: 100%; }
.grid line { stroke: #222b33; }
.grid .major { stroke: #29333c; }
.axis { font: 13px "Open Sans", sans-serif; fill: #ced2d4; }
.viewlabel { position: absolute; left: 2px; top: 4px; color: #eee; }
.viewwin { position: absolute; right: 5px; top: 4px; display: flex; gap: 1px; }
.navbar { position: absolute; right: 3px; top: 18px; width: 21px; height: 168px; background: #5c6167; border-radius: 3px; }
.navbar svg { width: 20px; height: 167px; }
.dynamic { position: absolute; left: 437px; top: 83px; display: flex; gap: 1px; }
.dynamic > * { height: 17px; border: 1px solid #151a20; border-bottom-width: 2px; }
.prompt { width: 92px; display: flex; align-items: center; justify-content: space-between; padding: 0 2px; background: #9b9b9b; color: #1b1b1b; white-space: nowrap; }
.prompt i { width: 8px; height: 9px; font-size: 6px; text-align: center; background: #f4f4fb; border: 1px solid #5452a5; color: #333; line-height: 7px; }
.dynamic input { width: 46px; padding: 0 2px; background: #a3a3a3; color: #1d1d1d; }
.dynamic .active { color: #fff; background: linear-gradient(#3b8ff0, #3b8ff0) 1px 50% / 37px 12px no-repeat #fff; }

.command { display: flex; height: 38px; color: #1c1c1c; font-size: 9px; line-height: 12px; border-top: 1px solid #707070; }
.grip { width: 15px; background: linear-gradient(#777, #494949); display: flex; flex-direction: column; align-items: center; justify-content: flex-end; gap: 3px; }
.grip svg { width: 10px; height: 12px; }
.lines { flex: 1; display: flex; flex-direction: column; }
.history { height: 23px; padding: 8px 1px 0; background: #c8c8c8; border-bottom: 1px solid #aaa; }
.current { flex: 1; display: flex; align-items: center; gap: 3px; padding-left: 3px; background: #fff; }
.current .tri { margin-left: -1px; }
.current b { font: 700 8px/12px "DejaVu Sans Mono", monospace; }
.current em { font: italic 8px/12px "DejaVu Sans Mono", monospace; }
.current button { background: #dadada; }
.current u { text-decoration: none; color: #4036bd; }
.current > em + button { margin-left: -3px; }
.current > em:last-child { margin-left: -3px; }

.statusbar { height: 15px; display: flex; justify-content: space-between; align-items: stretch; background: #353535; }
.layouts { display: flex; padding-left: 7px; }
.layouts button { width: 34px; background: #4d4d4d; color: #a2a2a2; margin-right: 2px; clip-path: polygon(0 0, 100% 0, calc(100% - 5px) 100%, 5px 100%); }
.layouts .on { width: 32px; background: #747474; color: #fff; font-weight: 700; }
.layouts .plus { width: 16px; color: #ddd; font-size: 10px; }
.toggles { display: flex; align-items: center; background: #505050; }
.toggles button { height: 15px; display: flex; align-items: center; justify-content: center; }
.toggles .model { width: 21px; background: #696969; font-weight: 600; color: #fff; }
.toggles .icon { width: 17px; }
.toggles .arrow { width: 8px; }
.toggles .text { width: 17px; }
.toggles .wide { width: 19px; }
.sep { width: 1px; height: 13px; background: #353535; margin: 0 1px; }

.site {
  position: absolute; z-index: 3; right: 71px; bottom: 18px; width: 235px; height: 115px; display: flex; align-items: center;
  gap: 17px; padding: 0 12px 0 13px; background: #222f55; color: #c8ccd3;
}
.site svg { width: 48px; height: 52px; }
.sitename { flex: 1; display: flex; flex-direction: column; gap: 2px; }
.sitename strong { display: flex; justify-content: space-between; font: 700 32px/36px "Noto Sans CJK SC", sans-serif; }
.sitename small { font: 200 16px/18px "DejaVu Sans", sans-serif; white-space: nowrap; }
</style>
